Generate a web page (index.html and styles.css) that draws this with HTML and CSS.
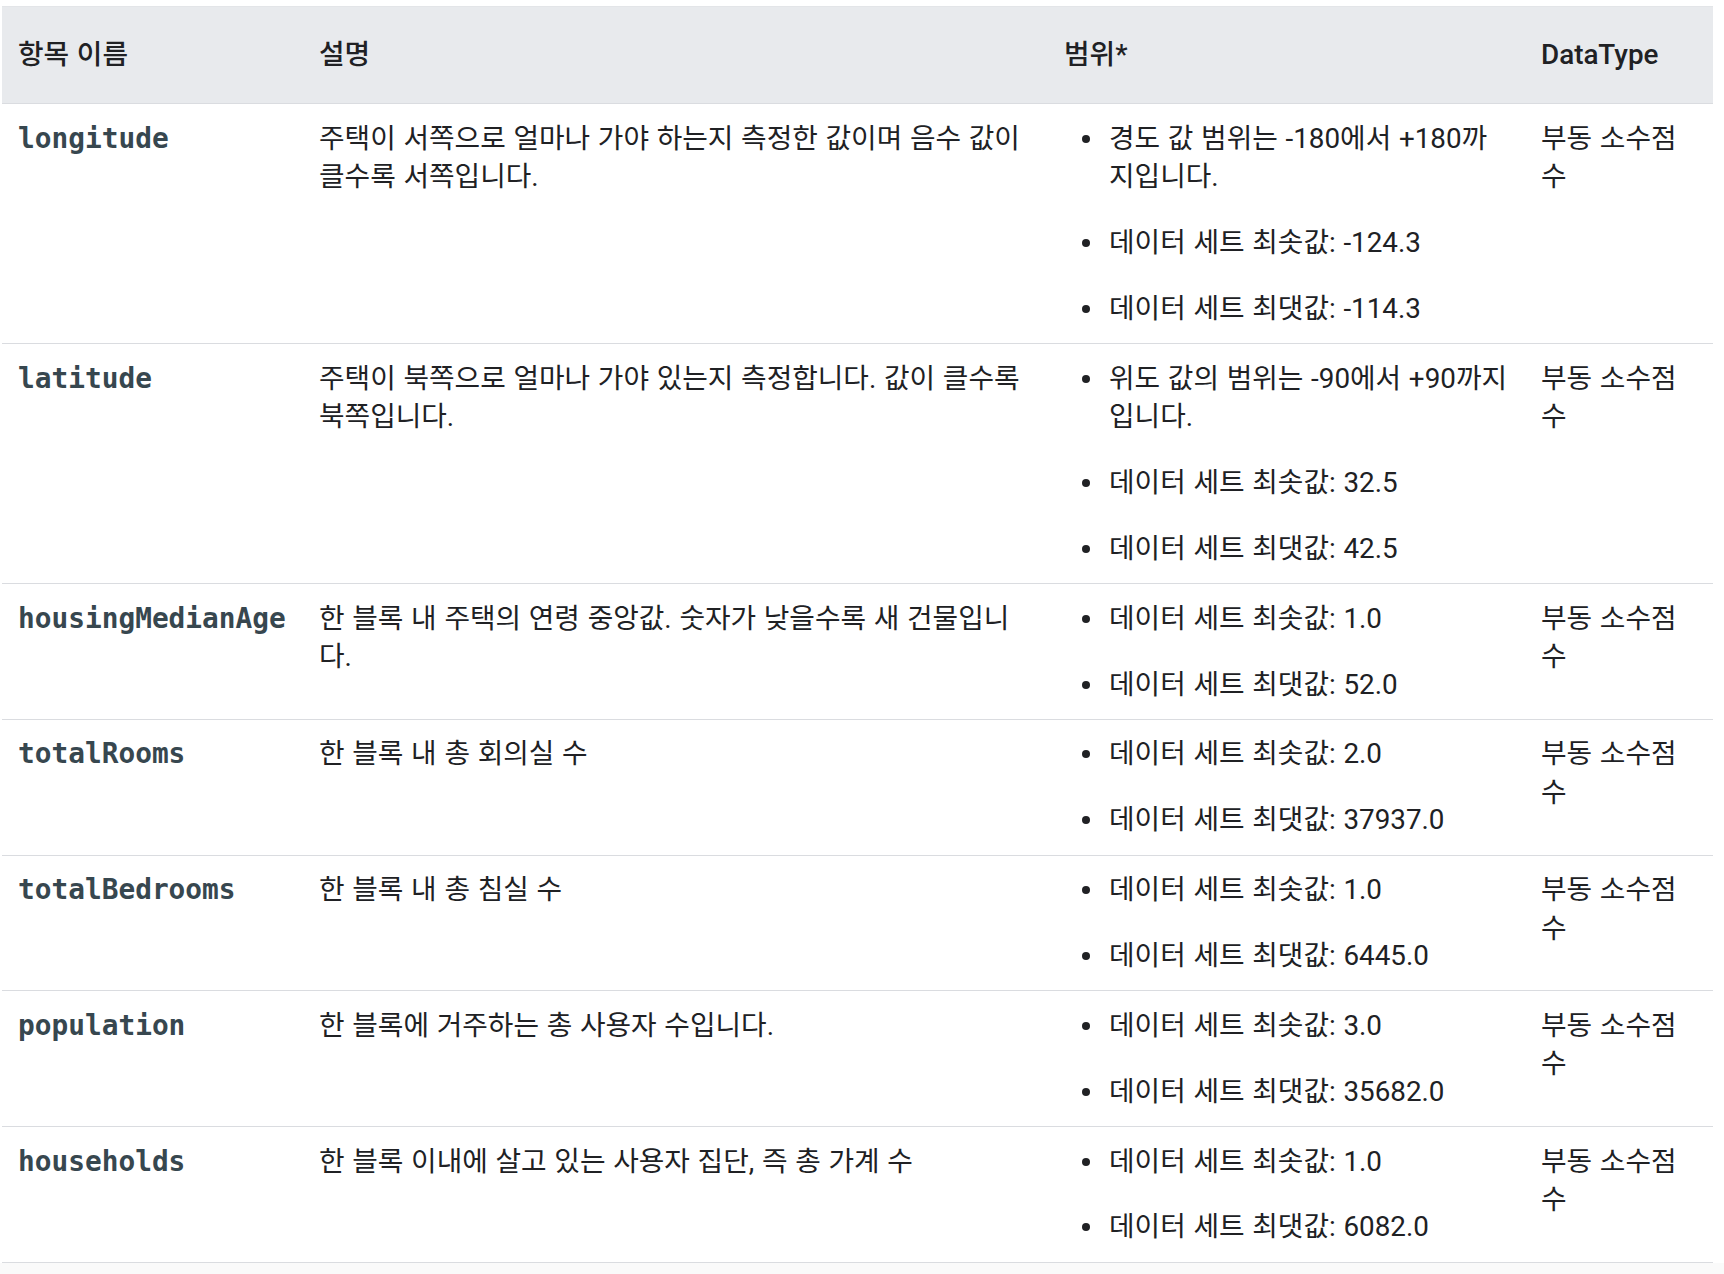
FILE: index.html
```html
<!DOCTYPE html>
<html lang="ko">
<head>
<meta charset="utf-8">
<title>데이터 세트 항목</title>
<link rel="stylesheet" href="styles.css">
</head>
<body>
<table class="fields">
  <colgroup>
    <col class="c-name">
    <col class="c-desc">
    <col class="c-range">
    <col class="c-type">
  </colgroup>
  <thead>
    <tr>
      <th>항목 이름</th>
      <th>설명</th>
      <th>범위*</th>
      <th>DataType</th>
    </tr>
  </thead>
  <tbody>
    <tr>
      <td><code>longitude</code></td>
      <td>주택이 서쪽으로 얼마나 가야 하는지 측정한 값이며 음수 값이 클수록 서쪽입니다.</td>
      <td class="range"><ul><li>경도 값 범위는 -180에서 +180까지입니다.</li><li>데이터 세트 최솟값: -124.3</li><li>데이터 세트 최댓값: -114.3</li></ul></td>
      <td>부동 소수점 수</td>
    </tr>
    <tr>
      <td><code>latitude</code></td>
      <td>주택이 북쪽으로 얼마나 가야 있는지 측정합니다. 값이 클수록 북쪽입니다.</td>
      <td class="range"><ul><li>위도 값의 범위는 -90에서 +90까지입니다.</li><li>데이터 세트 최솟값: 32.5</li><li>데이터 세트 최댓값: 42.5</li></ul></td>
      <td>부동 소수점 수</td>
    </tr>
    <tr>
      <td><code>housingMedianAge</code></td>
      <td>한 블록 내 주택의 연령 중앙값. 숫자가 낮을수록 새 건물입니다.</td>
      <td class="range"><ul><li>데이터 세트 최솟값: 1.0</li><li>데이터 세트 최댓값: 52.0</li></ul></td>
      <td>부동 소수점 수</td>
    </tr>
    <tr>
      <td><code>totalRooms</code></td>
      <td>한 블록 내 총 회의실 수</td>
      <td class="range"><ul><li>데이터 세트 최솟값: 2.0</li><li>데이터 세트 최댓값: 37937.0</li></ul></td>
      <td>부동 소수점 수</td>
    </tr>
    <tr>
      <td><code>totalBedrooms</code></td>
      <td>한 블록 내 총 침실 수</td>
      <td class="range"><ul><li>데이터 세트 최솟값: 1.0</li><li>데이터 세트 최댓값: 6445.0</li></ul></td>
      <td>부동 소수점 수</td>
    </tr>
    <tr>
      <td><code>population</code></td>
      <td>한 블록에 거주하는 총 사용자 수입니다.</td>
      <td class="range"><ul><li>데이터 세트 최솟값: 3.0</li><li>데이터 세트 최댓값: 35682.0</li></ul></td>
      <td>부동 소수점 수</td>
    </tr>
    <tr>
      <td><code>households</code></td>
      <td>한 블록 이내에 살고 있는 사용자 집단, 즉 총 가계 수</td>
      <td class="range"><ul><li>데이터 세트 최솟값: 1.0</li><li>데이터 세트 최댓값: 6082.0</li></ul></td>
      <td>부동 소수점 수</td>
    </tr>
  </tbody>
</table>
<div class="after"></div>
</body>
</html>
```

FILE: styles.css
```css
html, body {
  margin: 0;
  padding: 0;
  background: #ffffff;
}

body {
  font-family: "Roboto", "Noto Sans CJK KR", sans-serif;
  font-size: 27.8px;
  line-height: 38.4px;
  word-spacing: 0.8px;
  color: #202124;
}

.fields {
  margin: 6px 0 0 2px;
  width: 1711px;
  table-layout: fixed;
  border-collapse: collapse;
  border-spacing: 0;
}

.c-name { width: 301px; }
.c-desc { width: 745px; }
.c-range { width: 477px; }
.c-type { width: 188px; }

.fields th {
  background: #e8eaed;
  font-weight: 500;
  text-align: left;
  vertical-align: middle;
  padding: 29px 16px 29px 16px;
  border-top: 1px solid #e3e5e8;
  border-bottom: 1px solid #dadce0;
}

.fields td {
  vertical-align: top;
  padding: 15.5px 16px 15px 16px;
  border-bottom: 1px solid #dadce0;
}

.fields td.range {
  padding-right: 14px;
}

.fields code {
  font-family: "DejaVu Sans Mono", monospace;
  font-weight: 700;
  font-size: 27.8px;
  word-spacing: 0;
  color: #37474f;
}

.range ul {
  margin: 0;
  padding: 0;
  list-style: none;
}

.range li {
  display: flex;
}

.range li + li {
  margin-top: 27.4px;
}

.range li::before {
  content: "";
  flex: none;
  width: 8px;
  height: 8px;
  border-radius: 50%;
  background: #202124;
  margin: 15px 19px 0 18px;
}

.after {
  height: 20px;
  background: #fafafa;
}
```
